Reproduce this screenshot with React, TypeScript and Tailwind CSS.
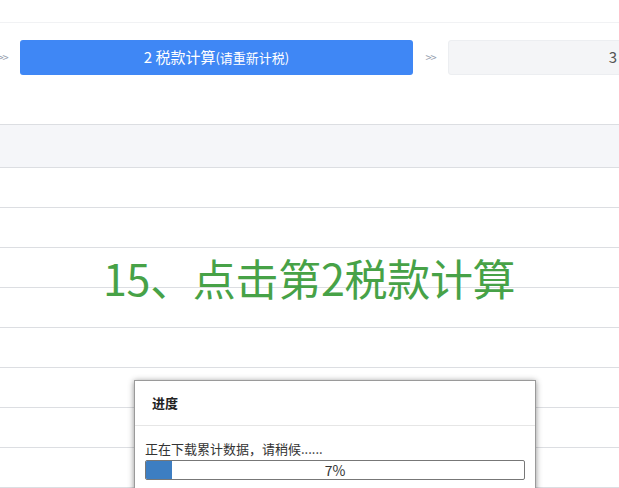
import React from "react";

const font = { fontFamily: '"Noto Sans CJK SC", "Noto Sans", sans-serif' };

function Arrow() {
  return (
    <span className="w-[15px] shrink-0 text-center text-[11px] leading-none text-gray-400 tracking-[-1px]">
      &gt;&gt;
    </span>
  );
}

export default function App() {
  const rows = [0, 1, 2, 3, 4, 5, 6, 7];
  const progress = 7;

  return (
    <div className="relative w-[619px] h-[488px] overflow-hidden bg-white" style={font}>
      {/* Top strip */}
      <div className="h-[23px] border-b border-[#f1f2f4]" />

      {/* Steps */}
      <div className="flex items-start gap-[10px] pt-[17px] -ml-[5px] h-[101px]">
        <div className="h-[35px] flex items-center"><Arrow /></div>
        <div className="w-[393px] h-[35px] shrink-0 rounded-[3px] bg-[#3f87f5] flex items-center justify-center text-white">
          <span className="text-[15px]">2 税款计算</span>
          <span className="text-[13px]">(请重新计税)</span>
        </div>
        <div className="h-[35px] flex items-center"><Arrow /></div>
        <div className="w-[393px] h-[35px] shrink-0 rounded-[3px] bg-[#f4f5f7] border border-[#eceef1] flex items-center justify-center text-[15px] text-[#555]">
          3 附表填写
        </div>
      </div>

      {/* Table */}
      <div className="border-t border-[#dcdee2]">
        <div className="h-[43px] bg-[#f5f6f9] border-b border-[#dcdee2]" />
        {rows.map((r) => (
          <div key={r} className="h-[40px] border-b border-[#dcdee2]" />
        ))}
      </div>

      {/* Annotation */}
      <div className="absolute left-[103px] top-[251px] text-[43px] leading-[52px] text-[#47a247] tracking-[-0.3px] whitespace-nowrap">
        15、点击第2税款计算
      </div>

      {/* Progress dialog */}
      <div className="absolute left-[134px] top-[380px] w-[402px] h-[140px] bg-white border border-[#9a9a9a] shadow-[0_1px_6px_rgba(0,0,0,0.45)]">
        <div className="h-[45px] border-b border-[#e6e6e6] flex items-center pl-[17px] text-[13px] font-bold text-[#222]">
          进度
        </div>
        <div className="px-[10px] pt-[14px]">
          <div className="text-[13px] leading-[18px] text-[#333]">正在下载累计数据，请稍候......</div>
          <div className="relative mt-[2px] w-[380px] h-[20px] border border-[#777] rounded-[2px] overflow-hidden bg-white">
            <div className="absolute left-0 top-0 bottom-0 bg-[#3d7ec2]" style={{ width: `${progress}%` }} />
            <div className="relative text-center text-[14px] leading-[18px] text-[#333]">{progress}%</div>
          </div>
        </div>
      </div>
    </div>
  );
}
